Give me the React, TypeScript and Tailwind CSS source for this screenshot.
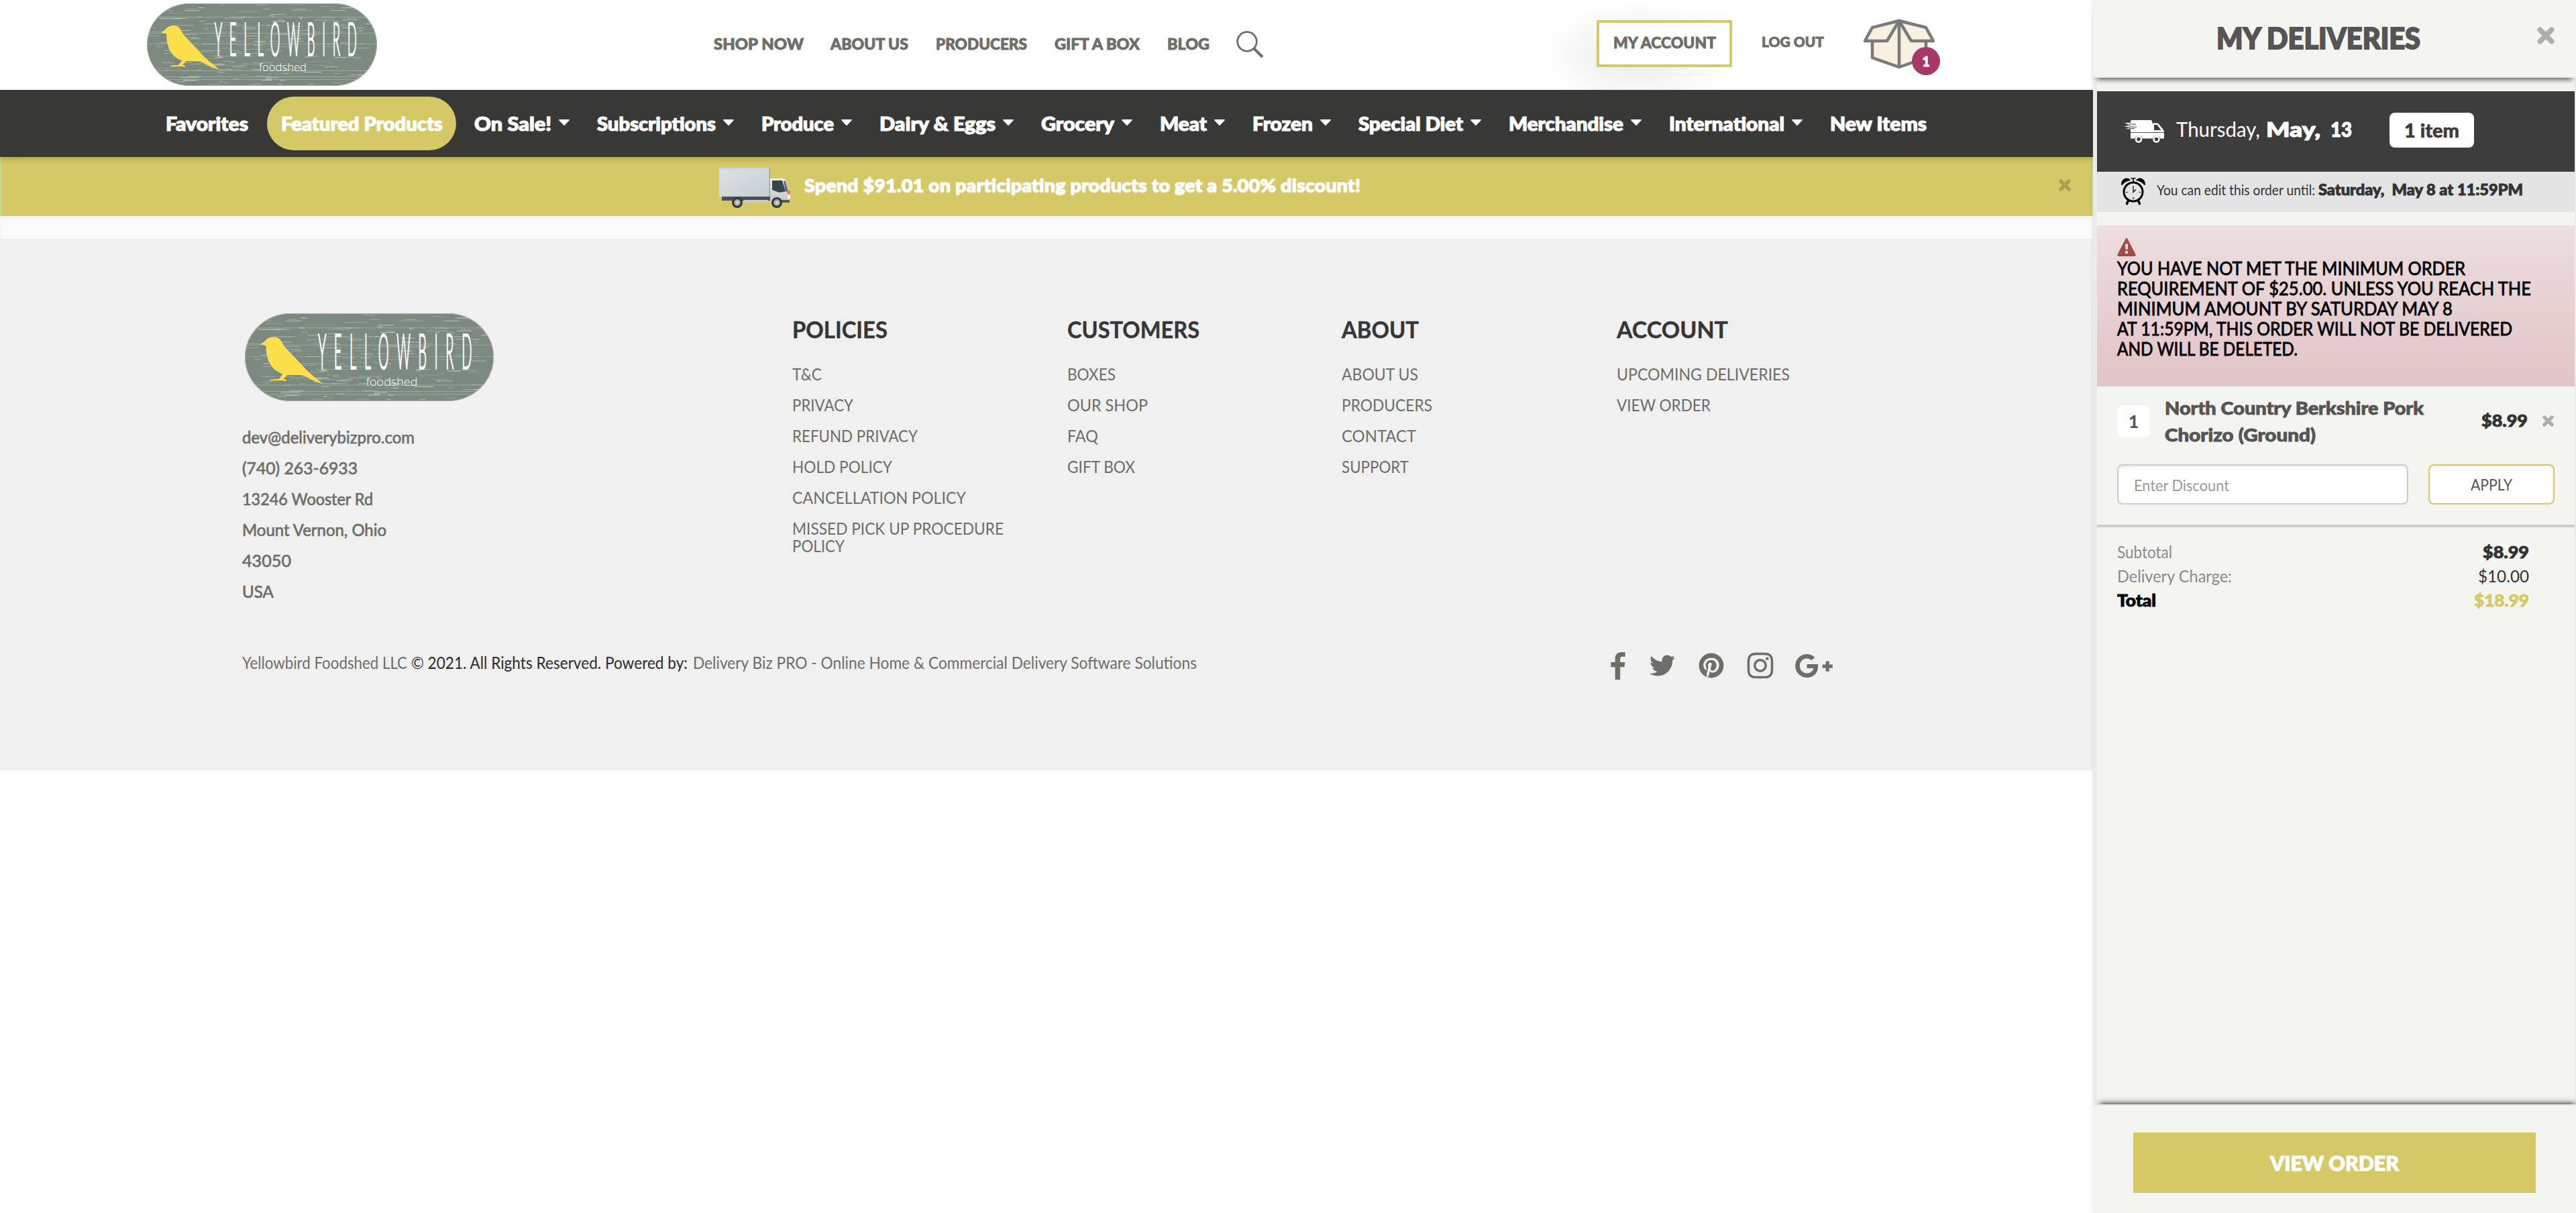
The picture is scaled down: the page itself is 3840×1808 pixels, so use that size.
import React, { useLayoutEffect, useRef } from "react";
import { FaTwitter, FaPinterest, FaInstagram, FaGooglePlusG } from "react-icons/fa";

/** Single line of text condensed or widened so that it spans exactly `w` pixels. */
function Fit({ w, children, className = "" }: { w: number; children: string; className?: string }) {
  const ref = useRef<HTMLSpanElement>(null);
  useLayoutEffect(() => {
    const el = ref.current;
    if (!el) return;
    el.style.transform = "none";
    const natural = el.getBoundingClientRect().width;
    el.style.transform = `scaleX(${w / natural})`;
  }, [w, children]);
  return (
    <span className={"block shrink-0 whitespace-pre " + className} style={{ width: w }}>
      <span ref={ref} className="inline-block origin-left">{children}</span>
    </span>
  );
}

function streaks() {
  let s = 11;
  const r = () => {
    s = (s * 16807) % 2147483647;
    return s / 2147483647;
  };
  const out: { x: number; y: number; w: number; h: number; o: number }[] = [];
  for (let i = 0; i < 230; i++) {
    out.push({ x: r() * 340 - 10, y: 2 + Math.floor(r() * 60) * 2, w: 5 + r() * r() * 42, h: 0.6 + r() * 0.8, o: 0.2 + r() * 0.4 });
  }
  [20, 44, 60, 100, 109, 113].forEach((y) => out.push({ x: 0, y, w: 343, h: 0.9, o: 0.35 }));
  return out;
}
const STREAKS = streaks();

function Logo({ id, className }: { id: string; className: string }) {
  return (
    <svg viewBox="0 0 343 123" preserveAspectRatio="none" className={className}>
      <defs>
        <clipPath id={id}>
          <rect width="343" height="123" rx="63" ry="61.5" />
        </clipPath>
      </defs>
      <g clipPath={`url(#${id})`}>
        <rect width="343" height="123" fill="#7b897f" />
        {STREAKS.map((k, i) => (
          <rect key={i} x={k.x} y={k.y} width={k.w} height={k.h} rx="0.5" fill="#dfe4e0" opacity={k.o} />
        ))}
      </g>
      <rect x="0.5" y="0.5" width="342" height="122" rx="62.5" ry="61" fill="none" stroke="#a9b3ac" />
      <path
        transform="scale(.4464 .3333) translate(-43 -15)"
        fill="#fbe04b"
        d="M92 143Q103 137 106 130Q114 114 132 114Q150 114 157 136L164 153L240 262Q262 286 285 312Q262 304 235 284Q222 273 212 274L174 274L162 290Q173 293 171 300Q160 296 150 297Q128 296 118 300Q120 290 148 291L160 271Q128 254 116 216Q107 185 109 154Q104 146 92 147Z"
      />
      <g transform="translate(101 78) scale(.27 1)">
        <text x="0" y="0" fontFamily="Lato" fontWeight="300" fontSize="69" textLength="785" lengthAdjust="spacing" fill="#fff" stroke="#fff" strokeWidth="2">
          YELLOWBIRD
        </text>
      </g>
      <text x="167" y="101" fontFamily="Open Sans" fontWeight="300" fontSize="15.5" textLength="71" lengthAdjust="spacingAndGlyphs" fill="#fff">
        foodshed
      </text>
    </svg>
  );
}

function Cross({ className }: { className: string }) {
  return (
    <svg viewBox="0 0 18 18" className={className} fill="none" stroke="currentColor" strokeWidth="5.4">
      <path d="M3 3L15 15M15 3L3 15" strokeLinecap="round" />
    </svg>
  );
}

function DeliveryTruck() {
  return (
    <svg viewBox="0 0 106 60" className="h-[60px] w-[106px]">
      <defs>
        <linearGradient id="cargo" x1="0" y1="0" x2="1" y2="1">
          <stop offset="0" stopColor="#dde2e6" />
          <stop offset="1" stopColor="#c6cdd2" />
        </linearGradient>
        <linearGradient id="cab" x1="0" y1="0" x2="0" y2="1">
          <stop offset="0" stopColor="#eceef0" />
          <stop offset="1" stopColor="#c3c4c2" />
        </linearGradient>
      </defs>
      <rect x="0" y="0" width="76" height="43" fill="url(#cargo)" />
      <rect x="0" y="0" width="76" height="2.5" fill="#cdd3d8" />
      <rect x="74.5" y="0" width="1.5" height="43" fill="#9fa7ad" />
      <rect x="4" y="43" width="74" height="6" fill="#4a4f52" />
      <rect x="37" y="48" width="36" height="4" fill="#c9cbcc" />
      <path d="M76 16h19q4 0 5 4l4 15q2 3 2 8v9H76z" fill="url(#cab)" />
      <path d="M79 19h15l5 16q-8 3-12 1l-8-3z" fill="#39444b" />
      <path d="M96 19l3 1 4 15-4 1z" fill="#60707a" />
      <rect x="101.500" y="34" width="4" height="5" fill="#e07a45" />
      <rect x="102" y="42" width="4" height="4" fill="#fff" />
      <rect x="79" y="48" width="26" height="4" fill="#55595b" />
      {[27, 86].map((x) => (
        <g key={x}>
          <circle cx={x} cy="52" r="8" fill="#30363a" />
          <circle cx={x} cy="52" r="5" fill="#a4a9ac" />
          <circle cx={x} cy="52" r="2.200" fill="#d6d9da" />
        </g>
      ))}
    </svg>
  );
}

function FastTruck() {
  return (
    <svg viewBox="0 0 60 34" className="h-[34px] w-[60px]">
      <path fill="#fff" d="M12 0H40Q42 0 42 2V4.500H49Q51 4.500 52.500 6.500L59 14.500Q60 16 60 18V27.500H54.500A6.500 6.500 0 0 0 42.500 27.500H28A6.500 6.500 0 0 0 16 27.500H10V13.500L2 13L10 11.500L0 9L10 8L1 4L10 4V2Q10 0 12 0Z" />
      <path d="M45 7H49.500L55.500 15H45Z" fill="#3c3c3c" />
      <path d="M10 18.500H60" stroke="#3c3c3c" strokeWidth="0.9" />
      <path d="M8 6L18 6.200M8 10L19 10.300M8 12.800L16 12.500" stroke="#3c3c3c" strokeWidth="1" />
      <circle cx="22" cy="28.500" r="4" fill="none" stroke="#fff" strokeWidth="2.600" />
      <circle cx="48.500" cy="28.500" r="4" fill="none" stroke="#fff" strokeWidth="2.600" />
    </svg>
  );
}

function AlarmClock() {
  return (
    <svg viewBox="0 0 36 41" className="h-[41px] w-[36px]">
      <path d="M0 10Q0 2 7 0.500Q12 0 14 4Q6 5 2 10.500Q0.500 11.500 0 10ZM36 10Q36 2 29 0.500Q24 0 22 4Q30 5 34 10.500Q35.500 11.500 36 10Z" fill="#000" />
      <path d="M14.500 0.800H21.500M18 0.800V6" stroke="#000" strokeWidth="1.600" />
      <path d="M10.500 34L8 40M25.500 34L28 40" stroke="#000" strokeWidth="3.400" />
      <circle cx="18" cy="21" r="14" fill="none" stroke="#000" strokeWidth="3" />
      <path d="M18 12V21.500L22 17.500M18 29V32M7 21.500H9.500M26.500 21.500H29" fill="none" stroke="#000" strokeWidth="1.200" />
    </svg>
  );
}

function OpenBox() {
  return (
    <svg viewBox="0 0 108 74" className="h-[74px] w-[108px]" fill="#f6f1de" stroke="#7a7a7a" strokeWidth="4.500" strokeLinejoin="round">
      <path d="M14 14V58L54 72L94 58V14L54 3Z" />
      <path d="M54 3L36 33H3L14 13Z" />
      <path d="M54 3L72 33H105L94 13Z" />
      <path d="M54 3V72" />
    </svg>
  );
}

const TOP = [
  { t: "SHOP NOW", w: 134, g: "ml-[502px]" },
  { t: "ABOUT US", w: 116, g: "ml-[40px]" },
  { t: "PRODUCERS", w: 136, g: "ml-[41px]" },
  { t: "GIFT A BOX", w: 127, g: "ml-[41px]" },
  { t: "BLOG", w: 63, g: "ml-[41px]" },
];

const CATS = [
  { t: "On Sale!", w: 115 },
  { t: "Subscriptions", w: 177 },
  { t: "Produce", w: 108 },
  { t: "Dairy & Eggs", w: 173 },
  { t: "Grocery", w: 109 },
  { t: "Meat", w: 70 },
  { t: "Frozen", w: 90 },
  { t: "Special Diet", w: 156 },
  { t: "Merchandise", w: 171 },
  { t: "International", w: 172 },
];

const CONTACT: [string, number][] = [
  ["dev@deliverybizpro.com", 257],
  ["(740) 263-6933", 172],
  ["13246 Wooster Rd", 195],
  ["Mount Vernon, Ohio", 215],
  ["43050", 73],
  ["USA", 47],
];

const COLS: { h: string; w: number; links: [string, number][] }[] = [
  {
    h: "POLICIES",
    w: 142,
    links: [["T&C", 44], ["PRIVACY", 91], ["REFUND PRIVACY", 187], ["HOLD POLICY", 149], ["CANCELLATION POLICY", 259], ["MISSED PICK UP PROCEDURE", 315]],
  },
  { h: "CUSTOMERS", w: 197, links: [["BOXES", 72], ["OUR SHOP", 120], ["FAQ", 46], ["GIFT BOX", 101]] },
  { h: "ABOUT", w: 115, links: [["ABOUT US", 114], ["PRODUCERS", 135], ["CONTACT", 111], ["SUPPORT", 100]] },
  { h: "ACCOUNT", w: 166, links: [["UPCOMING DELIVERIES", 258], ["VIEW ORDER", 140]] },
];

const ALERT: [string, number][] = [
  ["YOU HAVE NOT MET THE MINIMUM ORDER", 519],
  ["REQUIREMENT OF $25.00. UNLESS YOU REACH THE", 617],
  ["MINIMUM AMOUNT BY SATURDAY MAY 8", 500],
  ["AT 11:59PM, THIS ORDER WILL NOT BE DELIVERED", 589],
  ["AND WILL BE DELETED.", 269],
];

function Header() {
  return (
    <header className="relative flex h-[134px] items-start bg-white text-[22px] leading-[30px] font-black text-[#6d6e68] [-webkit-text-stroke:0.8px_currentColor]">
      <div className="absolute top-0 left-[2290px] h-[165px] w-[300px] bg-[radial-gradient(closest-side,rgba(0,0,0,0.08),rgba(0,0,0,0.04)_50%,transparent)]" />
      <Logo id="logo-top" className="mt-[5px] ml-[219px] h-[123px] w-[343px] [-webkit-text-stroke:0]" />
      {TOP.map((n) => (
        <div key={n.t} className={"mt-[51px] " + n.g}>
          <Fit w={n.w}>{n.t}</Fit>
        </div>
      ))}
      <svg viewBox="0 0 41 41" className="mt-[46px] ml-[40px] h-[41px] w-[41px]" fill="none" stroke="#6d6e68">
        <circle cx="16" cy="16" r="14.300" strokeWidth="2.800" />
        <path d="M26.500 26.500L39 39" strokeWidth="4" />
      </svg>
      <div className="relative mt-[30px] ml-[496px] flex h-[70px] w-[202px] justify-center border-4 border-[#d5c967] bg-white pt-[15px]">
        <Fit w={153}>MY ACCOUNT</Fit>
      </div>
      <Fit w={93} className="mt-[47px] ml-[44px] text-[21px]">LOG OUT</Fit>
      <div className="relative mt-[28px] ml-[58px]">
        <OpenBox />
        <div className="absolute top-[42px] left-[73px] flex h-[42px] w-[42px] items-center justify-center rounded-full bg-[#a83868] text-[20px] text-white">1</div>
      </div>
    </header>
  );
}

function Nav() {
  return (
    <nav className="relative flex h-[100px] items-center bg-[#383937] pl-[247px] text-[28px] leading-[40px] font-black text-white shadow-[0_4px_8px_rgba(0,0,0,0.18)] [-webkit-text-stroke:1.2px_currentColor]">
      <Fit w={123}>Favorites</Fit>
      <div className="ml-[28px] flex h-[80px] w-[282px] items-center justify-center rounded-[40px] bg-[#d5c967]">
        <Fit w={241}>Featured Products</Fit>
      </div>
      <div className="ml-[27px] flex">
        {CATS.map((c) => (
          <div key={c.t} className="mr-[41px] flex items-center">
            <Fit w={c.w}>{c.t}</Fit>
            <svg viewBox="0 0 16 9" className="-mt-1 ml-[11px] h-[9px] w-[16px]">
              <path d="M1 0H15Q16.500 0 15.500 1.500L9 8.500Q8 9.500 7 8.500L0.500 1.500Q-0.500 0 1 0Z" fill="#fff" />
            </svg>
          </div>
        ))}
        <Fit w={144}>New Items</Fit>
      </div>
    </nav>
  );
}

function Footer() {
  return (
    <footer className="h-[792px] bg-[#f0f0f0] text-[#6d6e68]">
      <div className="flex h-[590px]">
        <div className="w-[1181px] shrink-0 pt-[111px] pl-[361px]">
          <Logo id="logo-foot" className="ml-[4px] h-[131px] w-[371px]" />
          <div className="mt-[30px] text-[25px] leading-[46px] [-webkit-text-stroke:0.7px_currentColor]">
            {CONTACT.map(([t, w]) => (
              <Fit key={t} w={w}>{t}</Fit>
            ))}
          </div>
        </div>
        {COLS.map((c) => (
          <div key={c.h} className="w-[409.500px] shrink-0 pt-[115px]">
            <Fit w={c.w} className="text-[34px] leading-[40px] font-bold text-[#363636] [-webkit-text-stroke:0.4px_currentColor]">{c.h}</Fit>
            <div className="mt-[23px] text-[25px] leading-[46px]">
              {c.links.map(([t, w]) => (
                <Fit key={t} w={w}>{t}</Fit>
              ))}
              {c.h === "POLICIES" && <Fit w={78} className="-mt-[10px] leading-[26px]">POLICY</Fit>}
            </div>
          </div>
        ))}
      </div>
      <div className="flex h-[80px] items-center pl-[361px] text-[24.500px] leading-[40px]">
        <Fit w={246} className="mt-[4px]">Yellowbird Foodshed LLC</Fit>
        <Fit w={412} className="mt-[4px] ml-[6px] text-[#2b2b2b]">© 2021. All Rights Reserved. Powered by:</Fit>
        <Fit w={751} className="mt-[4px] ml-[8px]">Delivery Biz PRO - Online Home &amp; Commercial Delivery Software Solutions</Fit>
        <div className="mt-[12px] ml-[617px] flex h-[42px] items-center">
          <svg viewBox="95 0 864 1664" className="h-[41px] w-[22px]" fill="#6d6e68">
            <path d="M959 12v264h-157q-86 0-116 36t-30 108v189h293l-39 296h-254v759h-306v-759h-255v-296h255v-218q0-186 104-288.500t277-102.500q147 0 228 12z" />
          </svg>
          <FaTwitter className="ml-[36px] h-[38px] w-[38px]" />
          <FaPinterest className="ml-[35px] h-[38px] w-[38px]" />
          <FaInstagram className="ml-[32px] h-[44px] w-[44px]" />
          <FaGooglePlusG className="ml-[29px] h-[57px] w-[58px]" />
        </div>
      </div>
    </footer>
  );
}

function Panel() {
  return (
    <aside className="relative flex h-[1808px] w-[720px] shrink-0 flex-col bg-[#f4f5f0] shadow-[0_0_6px_rgba(0,0,0,0.1)]">
      <div className="relative z-10 flex h-[116px] shrink-0 items-start border-b-2 border-[#e9eae5] bg-[#f4f5f0] shadow-[0_8px_8px_-6px_rgba(0,0,0,0.75)]">
        <Fit w={304} className="mt-[31px] ml-[184px] text-[44px] leading-[50px] font-black text-[#555] [-webkit-text-stroke:2px_currentColor]">MY DELIVERIES</Fit>
        <Cross className="mt-[40px] ml-[174px] h-[26px] w-[26px] text-[#aeaeae]" />
      </div>
      <div className="grow border-r-2 border-l-[6px] border-[#ebece7] pt-[20px]">
        <div className="flex h-[120px] bg-[#3c3c3c] text-[31px] leading-[40px] text-white">
          <div className="mt-[43px] ml-[40px] shrink-0"><FastTruck /></div>
          <Fit w={125} className="mt-[36px] ml-[18px]">Thursday,</Fit>
          <Fit w={81} className="mt-[36px] ml-[9px] font-black [-webkit-text-stroke:1.2px_currentColor]">May,</Fit>
          <Fit w={32} className="mt-[36px] ml-[15px] font-black [-webkit-text-stroke:1.2px_currentColor]">13</Fit>
          <div className="mt-[32px] ml-[56px] flex h-[52px] w-[126px] shrink-0 items-center justify-center rounded-lg bg-white text-[28px] font-black text-[#3c3c3c] [-webkit-text-stroke:0.6px_currentColor]">
            <Fit w={82}>1 item</Fit>
          </div>
        </div>
        <div className="flex h-[60px] bg-[#e4e4e4] text-[22px] leading-[30px] text-[#333]">
          <div className="mt-[9px] ml-[36px] shrink-0"><AlarmClock /></div>
          <Fit w={236} className="mt-[12px] ml-[17px]">You can edit this order until:</Fit>
          <Fit w={305} className="mt-[12px] ml-[5px] font-black [-webkit-text-stroke:0.9px_currentColor]">Saturday,  May 8 at 11:59PM</Fit>
        </div>
        <div className="mt-[20px] h-[240px] bg-linear-to-b from-[#eddedf] to-[#e2c4c6] pt-[19px] pl-[30px] text-[26px] leading-[30px] text-black [-webkit-text-stroke:0.8px_currentColor]">
          <svg viewBox="0 0 28 27" className="mb-[3px] h-[27px] w-[28px]">
            <path d="M12.500 1Q14 -0.800 15.500 1L27.600 24.500Q28 27 26 27H2Q0 27 0.400 24.500Z" fill="#a04c48" />
            <path d="M12 8.500H16.200L15.700 17H12.500ZM12.200 19H16V23H12.200Z" fill="#eddedf" />
          </svg>
          {ALERT.map(([t, w]) => (
            <Fit key={t} w={w}>{t}</Fit>
          ))}
        </div>
        <div className="flex h-[116px] pl-[30px] text-[26px] leading-[40px] font-black text-[#555]">
          <div className="mt-[26px] h-[50px] w-[49px] shrink-0 rounded-lg bg-white text-center leading-[52px] shadow-[inset_0_2px_2px_rgba(0,0,0,0.06)]">1</div>
          <div className="mt-[12px] ml-[22px] w-[472px] shrink-0 [-webkit-text-stroke:0.9px_currentColor]">
            <Fit w={386}>North Country Berkshire Pork</Fit>
            <Fit w={225}>Chorizo (Ground)</Fit>
          </div>
          <Fit w={69} className="mt-[31px] text-[24px] text-[#333] [-webkit-text-stroke:0.9px_currentColor]">$8.99</Fit>
          <Cross className="mt-[43px] ml-[22px] h-[17px] w-[17px] text-[#aeaeae]" />
        </div>
        <div className="flex h-[90px] pl-[30px] text-[24px] leading-[56px]">
          <div className="h-[60px] w-[434px] rounded-lg border-2 border-[#ccc] bg-white pt-[1px] pl-[23px] text-[#999] shadow-[inset_0_2px_4px_rgba(0,0,0,0.08)]">
            <Fit w={142}>Enter Discount</Fit>
          </div>
          <div className="ml-[30px] flex h-[60px] w-[188px] justify-center rounded-lg border-2 border-[#d5c967] bg-white leading-[55px] text-[#555] shadow-[inset_0_2px_4px_rgba(0,0,0,0.08)]">
            <Fit w={62}>APPLY</Fit>
          </div>
        </div>
        <div className="flex justify-between border-t-4 border-[#cecece] pt-[19px] pr-[68px] pl-[30px] text-[24.500px] leading-[36px]">
          <div className="text-[#8a8a8a]">
            <Fit w={82}>Subtotal</Fit>
            <Fit w={171}>Delivery Charge:</Fit>
            <Fit w={58} className="font-black text-black [-webkit-text-stroke:0.9px_currentColor]">Total</Fit>
          </div>
          <div className="flex flex-col items-end text-[#333]">
            <Fit w={69} className="font-black [-webkit-text-stroke:0.9px_currentColor]">$8.99</Fit>
            <Fit w={76}>$10.00</Fit>
            <Fit w={82} className="font-black text-[#d5c967] [-webkit-text-stroke:0.9px_currentColor]">$18.99</Fit>
          </div>
        </div>
      </div>
      <div className="relative flex h-[162px] shrink-0 justify-center border-t-2 border-[#e9eae5] bg-[#f4f5f0] pt-[40px] shadow-[4px_-8px_8px_-6px_rgba(0,0,0,0.75)]">
        <div className="flex h-[90px] w-[600px] items-center justify-center bg-[#d5c967] text-[30px] font-black text-white [-webkit-text-stroke:1.2px_currentColor]">
          <Fit w={192}>VIEW ORDER</Fit>
        </div>
      </div>
    </aside>
  );
}

export default function App() {
  return (
    <div className="flex h-[1808px] w-[3840px] overflow-hidden bg-white font-['Lato',sans-serif]">
      <main className="w-[3120px] shrink-0">
        <Header />
        <Nav />
        <div className="flex h-[88px] border-x-2 border-[#b9dd95] bg-[#d5c967] text-[27px] leading-[40px] font-black text-white">
          <div className="mt-[16px] ml-[1070px]"><DeliveryTruck /></div>
          <Fit w={829} className="mt-[22px] ml-[21px] text-shadow-[0_2px_0_rgba(255,255,255,0.35)] [-webkit-text-stroke:1.1px_currentColor]">Spend $91.01 on participating products to get a 5.00% discount!</Fit>
          <Cross className="mt-[33px] ml-[1041px] h-[18px] w-[18px] text-[#aaa052]" />
        </div>
        <div className="h-[34px] bg-[#fcfafb] shadow-[inset_0_5px_5px_rgba(0,0,0,0.03)]" />
        <Footer />
      </main>
      <Panel />
    </div>
  );
}
